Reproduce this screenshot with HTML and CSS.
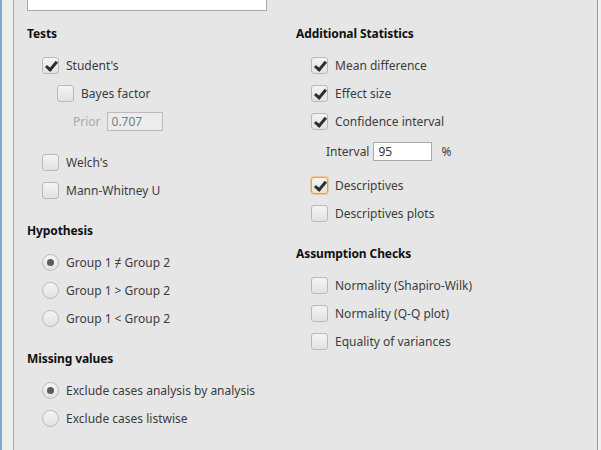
FILE: index.html
```html
<!DOCTYPE html>
<html>
<head>
<meta charset="utf-8">
<link rel="stylesheet" href="styles.css">
</head>
<body>
<div class="frame">
  <div class="gutter"></div>
  <div class="panel">
    <div class="topbox"></div>
    <div class="cols">
      <div class="col">
        <div class="head">Tests</div>
        <div class="row i1"><span class="cb on"></span><span>Student's</span></div>
        <div class="row i2"><span class="cb"></span><span>Bayes factor</span></div>
        <div class="row i3"><span class="dis">Prior</span><span class="field disabled">0.707</span></div>
        <div class="row i1 gapTop"><span class="cb"></span><span>Welch's</span></div>
        <div class="row i1"><span class="cb"></span><span>Mann-Whitney U</span></div>

        <div class="head sec">Hypothesis</div>
        <div class="row i1"><span class="rb on"></span><span>Group 1 ≠ Group 2</span></div>
        <div class="row i1"><span class="rb"></span><span>Group 1 &gt; Group 2</span></div>
        <div class="row i1"><span class="rb"></span><span>Group 1 &lt; Group 2</span></div>

        <div class="head sec">Missing values</div>
        <div class="row i1"><span class="rb on"></span><span>Exclude cases analysis by analysis</span></div>
        <div class="row i1"><span class="rb"></span><span>Exclude cases listwise</span></div>
      </div>
      <div class="col">
        <div class="head">Additional Statistics</div>
        <div class="row i1"><span class="cb on"></span><span>Mean difference</span></div>
        <div class="row i1"><span class="cb on"></span><span>Effect size</span></div>
        <div class="row i1"><span class="cb on"></span><span>Confidence interval</span></div>
        <div class="row irow i2b"><span>Interval</span><span class="field">95</span><span class="pct">%</span></div>
        <div class="row i1"><span class="cb on focus"></span><span>Descriptives</span></div>
        <div class="row i1"><span class="cb"></span><span>Descriptives plots</span></div>

        <div class="head sec">Assumption Checks</div>
        <div class="row i1"><span class="cb"></span><span>Normality (Shapiro-Wilk)</span></div>
        <div class="row i1"><span class="cb"></span><span>Normality (Q-Q plot)</span></div>
        <div class="row i1"><span class="cb"></span><span>Equality of variances</span></div>
      </div>
    </div>
  </div>
  <div class="rgutter"></div>
</div>
</body>
</html>
```
FILE: styles.css
```css
html, body {
  margin: 0;
  padding: 0;
  width: 601px;
  height: 450px;
  overflow: hidden;
  background: #e6e6e6;
  font-family: "Noto Sans", "Open Sans", sans-serif;
  font-size: 12px;
  color: #3c3c3c;
}
.frame {
  display: flex;
  height: 450px;
}
.gutter {
  flex: none;
  width: 14px;
  background: #eeeeee;
  border-left: 2px solid #7fa6d6;
  border-right: 1px solid #a8a8a8;
  box-sizing: border-box;
}
.rgutter {
  width: 4px;
  flex: none;
  background: #efefef;
  border-left: 1px solid #9a9a9a;
  box-sizing: border-box;
}
.panel {
  flex: 1;
  background: #e6e6e6;
  padding-left: 13px;
}
.topbox {
  width: 240px;
  height: 20px;
  margin-top: -9px;
  background: #ffffff;
  border: 1px solid #a9a9a9;
  box-sizing: border-box;
}
.cols {
  display: grid;
  grid-template-columns: 269px 1fr;
  margin-top: 13px;
}
.col {
  display: flex;
  flex-direction: column;
}
.head {
  height: 20px;
  line-height: 20px;
  font-weight: bold;
  color: #111;
  margin-bottom: 7px;
  letter-spacing: -0.1px;
}
.head.sec {
  margin-top: 17px;
}
.row {
  height: 28px;
  display: flex;
  align-items: center;
  gap: 7px;
  white-space: nowrap;
}
.i1 { padding-left: 15px; }
.i2 { padding-left: 30px; }
.i3 { padding-left: 46px; gap: 6px; }
.i2b { padding-left: 30px; }
.gapTop { margin-top: 13px; }
.irow {
  height: 32px;
  margin-bottom: 4px;
  gap: 4px;
}
.dis { color: #a8a8a8; }
.cb, .rb {
  width: 17px;
  height: 17px;
  box-sizing: border-box;
  border: 1px solid #b9b9b9;
  background: linear-gradient(#f4f4f4, #e2e2e2);
  flex: none;
  position: relative;
}
.cb { border-radius: 3px; }
.rb { border-radius: 50%; }
.cb.on::after {
  content: "";
  position: absolute;
  left: 5px;
  top: 1px;
  width: 4px;
  height: 9px;
  border-right: 3px solid #2e2e2e;
  border-bottom: 3px solid #2e2e2e;
  transform: rotate(40deg);
}
.rb.on::after {
  content: "";
  position: absolute;
  left: 4px;
  top: 4px;
  width: 7px;
  height: 7px;
  border-radius: 50%;
  background: #5c5c5c;
}
.cb.focus {
  border: 1px solid #e0a050;
  box-shadow: 0 0 0 1px #f2c890;
}
.field {
  display: inline-block;
  height: 19px;
  line-height: 17px;
  box-sizing: border-box;
  border: 1px solid #a9a9a9;
  background: #ffffff;
  padding-left: 4px;
  width: 59px;
  color: #333;
}
.field.disabled {
  width: 56px;
  background: #ececec;
  border-color: #bbbbbb;
  color: #7a7a7a;
}
.pct { margin-left: 5px; }
```
